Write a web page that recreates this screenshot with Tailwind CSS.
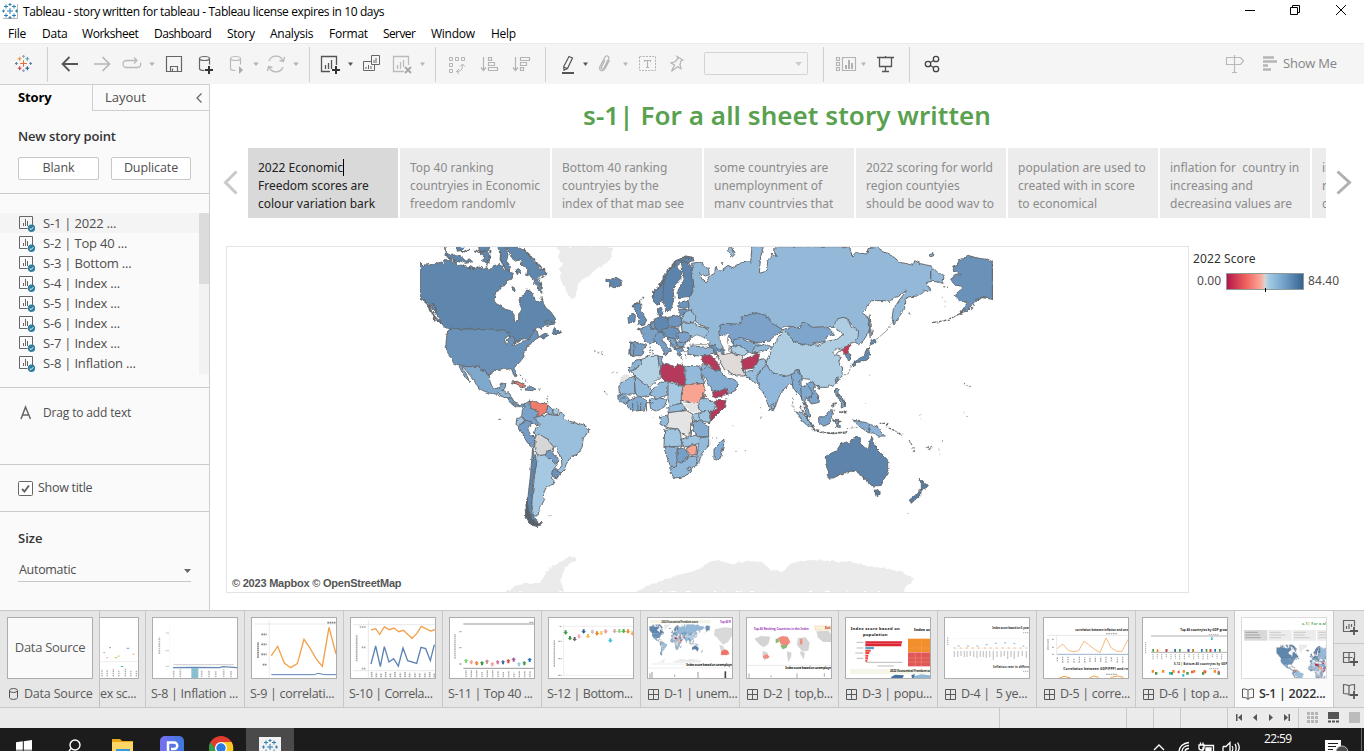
<!DOCTYPE html>
<html lang="en">
<head>
<meta charset="utf-8">
<title>Tableau - story written for tableau</title>
<script src="https://cdn.jsdelivr.net/npm/@tailwindcss/browser@4"></script>
</head>
<body class="w-[1364px] h-[751px] overflow-hidden bg-white flex flex-col font-['Open_Sans','Noto_Sans',sans-serif] text-[#4e4e4e] whitespace-nowrap">

<!-- Shared drawings -->
<svg class="absolute w-0 h-0" aria-hidden="true">
<defs>
<filter id="coast" x="0" y="0" width="1" height="1"><feTurbulence type="fractalNoise" baseFrequency=".22" numOctaves="2" seed="4"/><feDisplacementMap in="SourceGraphic" scale="3.500" xChannelSelector="R" yChannelSelector="G"/></filter>
<g id="tlogo"><path stroke="#eb6a2c" d="M0-3.5v7M-3.5 0h7"/><path stroke="#e8912f" d="M-4-7v4M-6-5h4"/><path stroke="#5b9aa8" d="M4-7v4M2-5h4"/><path stroke="#c03a3f" d="M-4 3v4M-6 5h4"/><path stroke="#2a4f88" d="M4 3v4M2 5h4"/><path stroke="#8ea0c4" d="M0-9v3M-1.5-7.5h3M0 6v3M-1.5 7.5h3"/><path stroke="#5f7d9e" d="M-9 0h3M-7.5-1.5v3M6 0h3M7.5-1.5v3"/></g>
<g id="blogo" stroke="#2f7fb2"><path d="M0-3v6M-3 0h6M-4-6.500v4M-6-4.500h4M4-6.500v4M2-4.500h4M-4 2.500v4M-6 4.500h4M4 2.500v4M2 4.500h4M0-8v3M-1.500-6.500h3M0 5v3M-1.500 6.500h3M-8 0h3M-6.500-1.500v3M5 0h3M6.500-1.500v3"/></g>
<g id="grid4" fill="none" stroke="#5a5a5a"><path d="M.5.500h10v10h-10zM5.500.500v10M.5 5.500h10"/></g>
<g id="sheeticon"><path d="M13.500 9V.500H.5v12h8" fill="none" stroke="#666"/><path d="M4.500 10V7M6.500 10V3M8.500 10V5" stroke="#666" fill="none"/><circle cx="12.500" cy="12.300" r="3.700" fill="#2f7d9f"/><path d="M10.700 12.400l1.300 1.300 2.300-2.500" stroke="#fff" fill="none"/></g>
<g id="up"><path d="M0-7l7 7H3v6h-6V0h-4z"/></g>

<g id="world" stroke-linejoin="round">
  <g transform="translate(410 240) scale(.33333)">
    <path fill="#ebebeb" d="M438 20H610L600 62 585 72 560 85 545 98 528 112 512 122 502 140 497 170 490 178 472 162 466 145 455 130 450 110 455 95 446 88 460 72 448 60 445 45 452 36z"/>
    <g stroke="#666a6e" stroke-width="3">
    <path fill="#5f87ae" d="M31 67L40 76 52 71 63 78 72 70 86 72 92 66 99 71 104 58 112 62 124 57 127 69 137 67 142 77 160 75 172 84 182 77 196 86 205 80 222 88 231 82 236 92 248 84 252 72 262 80 268 70 280 86 287 96 294 89 300 97 310 100 302 118 290 122 288 136 270 140 266 152 257 156 252 180 257 190 272 198 286 208 302 212 311 222 314 246 321 248 326 240 326 222 334 212 328 200 332 186 329 172 344 164 350 150 362 154 371 166 376 184 390 187 397 170 400 190 408 204 421 214 436 235 437 247 424 252 404 256 395 266 386 262 373 270 368 280 358 296 344 296 330 299 312 308 304 312 300 295 292 282 278 270 268 272 250 267H118L104 262 92 246 80 222 66 206 58 190 44 186 31 178z"/>
    <path fill="#5f87ae" d="M104 20L108 38 122 46 140 44 154 50 168 64 178 56 188 66 166 70 150 62 138 66 124 54 107 50zM140 20L142 34 158 30 160 20M205 20L210 40 222 46 218 62 236 72 242 50 232 38 240 20M262 20L272 40 270 58 284 84 296 96 302 82 290 62 294 44 284 20M286 20L304 46 312 64 330 60 336 74 354 90 350 106 366 112 372 132 384 136 382 148 396 160 394 136 382 118 392 106 410 102 400 88 388 90 384 72 372 66 362 46 348 38 336 28 318 20zM306 140l8 4 2 8-9-2zM402 244l14-4 18 12-22 4zM426 280l8-18 10 8 8 12-14 2zM388 290l12-8 16 4-14 8zM316 90l10-4 6 12-10 6z"/>
    <path fill="none" d="M38 178l14 14 10 24M56 194l8 20 10 16 20 20M66 188l12 14-4 18M72 228l3 16M150 30l16 8 10-8M196 30l12 8 20-6" stroke-width="5"/>
    <path fill="none" stroke-width="5" stroke-dasharray="10 4" d="M338 28l28 22 18 24 18 14 6 16-20 14 8 22-2 14M104 44l20 14 30 8M160 76l24 10 20-4M242 30l-6 30-8 22M270 30l6 40 18 24"/>
    <path fill="#6a92b8" d="M118 267H250L268 272 282 270 300 280 294 288 286 292 284 306 290 314 294 296 302 292 314 292 314 304 307 316 318 314 330 306 344 302 358 296 366 284 374 270 382 274 386 293 370 302 360 314 350 318 348 334 340 338 342 350 336 358 324 372 315 384 316 396 321 408 317 410 308 396 304 386 290 388 282 384 272 388 258 388 244 394 238 406 228 398 224 388 215 392 206 378 190 380 168 380 148 375 131 370 124 354 116 346 110 334 108 310 110 290 113 276z"/>
    <path fill="#7fa8cd" d="M148 375L168 380 190 380 206 378 215 392 224 388 228 398 238 406 240 424 246 440 258 446 270 440 274 432 288 432 284 446 270 456 264 462 250 462 232 458 208 446 200 434 196 424 178 404 168 390 156 380zM146 376l8 16 8 12 8 12 9 8-9-18-10-14-6-16z"/>
    <path fill="#8fb7d8" d="M264 462l10-10 8-2 2 12 12-4 10 14-4 12-12-10-14-6z"/><path fill="#7099c0" d="M290 474l16-4 6 20 18 4 12-2-4 8-18 0-12-8z"/>
    <path fill="#f07c6c" d="M302 426l20-2 26 14-14 2-14-8z"/><path fill="#7099c0" d="M350 442l14-2 14 8-14 4-16-2zM328 448l8 2"/>
    <path fill="none" stroke-width="3" stroke-dasharray="5 7" d="M330 404l8 12 16 14M410 462l2 24 4 10M386 446l8 4M265 538h12M552 332l14 6 18 8M582 454l8 4-2 6"/>
    <path fill="#7aa2cb" d="M343 492l18-10 4 20 28 8 4 22-10 4-2 18-30-6-20-18 2-16z"/>
    <path fill="#f07c6c" d="M360 486l12-4 10 7 20-2 12 10-2 16-8 6-10 16-10-4 0-18-22-8z"/>
    <path fill="#8ab2d6" d="M414 496l14 12-2 16-10-2-6-10z"/><path fill="#a8cae2" d="M428 508l18 0-2 16-14-2z"/><path fill="#d8d8d8" stroke="none" d="M446 508l12 8-8 8-5-2z"/>
    <path fill="#9cc2de" d="M320 536l14-6 10 12-16 14-10-2z"/>
    <path fill="#769dc6" d="M344 540l22 6-12 24 10 18 10 4-2 32-20-16-18-32-10-18 20-12z"/>
    <path fill="#9abfdc" d="M372 534l18-6 12 2 10-8 16 4 18 0 8-10 12 22 26 10 28 6 16 12 0 12-16 16-4 28-12 20-22 8-14 24-6 16-14 14-6-8 14-20-2-24-10-14-6-16-16-4-26-22-10 2-14-16 6-20 14-6z"/>
    <path fill="#d6d6d6" d="M376 590l12-8 24 16 18 22 0 12-18 0-4 14-26 0-8-22z"/>
    <path fill="#759cc5" d="M408 634l16-4 8 16 12 8-2 16-14 0-20-20z"/><path fill="#6b91bb" d="M430 688l10-2 10 14-8 14-14-4-4-12z"/>
    <path fill="#a5c9e2" d="M382 648l24-4 28 26 6 6-14 18-2 20 8 8-4 14-20 4-4 14-8 16 8 8-16 28-4 22-18 0 0-46 6-60z"/>
    <path fill="#6086ae" d="M368 624l8 22 4 26-10 42-6 80 8 38 20 24-16 0-18-24-6-42 10-90z"/>
    <path fill="#59626b" d="M345 794l8-22 8 56 14 18 22 2-16 12-20-8-14-22z"/>
    <path stroke="#c8c8c8" d="M414 827h12"/>
    </g>
  </g>

  <g transform="translate(600 240) scale(.33333)">
    <path fill="#ebebeb" d="M0 20h28l-6 34-12 24-10 6z"/>
    <g stroke="#666a6e" stroke-width="3">
    <!-- Russia -->
    <path fill="#94b8d8" d="M276 70L300 66 324 82 328 104 316 108 298 98 306 118 318 128 326 110 344 100 346 82 360 94 384 76 400 84 430 64 452 66 456 20 490 20 482 50 478 100 498 94 504 62 516 40 532 50 520 30 530 20 H748L756 48 768 38 800 42 804 26 832 22 850 34 880 50 898 66 940 76 944 62 960 70 996 80 1014 98 1032 112 1028 130 1014 126 996 124 976 128 990 144 992 152 972 152 952 168 930 170 914 178 914 206 896 232 882 252 876 238 880 208 898 180 920 152 904 160 896 170 882 172 870 184 850 182 814 182 786 218 804 232 810 262 804 280 790 302 776 314 762 304 776 280 760 260 740 234 714 236 700 262 672 264 640 270 616 248 590 264 560 256 540 270 510 250 496 230 466 220 424 232 420 254 360 256 356 278 370 300 366 332 340 324 320 310 300 290 326 264 290 250 280 224 266 210 264 180 280 154z"/>
    <path fill="#94b8d8" d="M388 20l-4 14 12 18 8-8-10-24zM810 224l4 38 4 20-8 8-2-30zM368 74l4-6-8 0zM988 44l14-4-2 8-10 2z"/>
    <!-- Nordic -->
    <path fill="#5f86af" d="M158 158l22-22 12-28 20-24 22-26 22-10 22 4 4 10-20 4-16-2-18 14-18 20-16 48-4 28-10 20-14-4-8-16z"/>
    <path fill="#5c83ab" d="M192 124l18-38 16-12 20 22-4 22-24 28 4 26-8 34-14 10-12-34z"/>
    <path fill="#5c83ab" d="M244 66l20 0 10 16 8 60-12 30-34 4-2-24 18-36z"/>
    <path fill="none" stroke-width="7" stroke-dasharray="7 3" d="M158 170l4-18 26-20 4-24 20-26 16-18 24-12 24 2"/>
    <path fill="#5f86af" d="M18 114l14 6 16-8 18 10-2 12-18 10-18-6 2-10-12-2zM172 206l12-4 6 16-10 14-6-10z"/>
    <path fill="#6c94bd" d="M240 186l24-4 4 16-14 8-18-6zM236 208l24 0 2 16-24 2z"/>
    <!-- British Isles -->
    <path fill="#658db6" d="M98 196l12-8 12 4 2 20 8 16 8 12-6 12-24 4 8-18-4-14zM84 232l12-12 10 8-2 18-18 4z"/><path fill="none" stroke-width="5" stroke-dasharray="5 3" d="M96 200l26-16 6-14"/>
    <!-- Western Europe -->
    <path fill="#7ba1c6" d="M114 268l24-8 18-16 20 18-4 22-4 18-20 10-16-8-4-26z"/><path fill="#769cc3" d="M92 306l24 2 24 8-10 12-6 22-20 0-14-4z"/><path fill="#7ba1c6" d="M92 308l10 2-2 36-10-2z"/>
    <path fill="#5f87b0" d="M162 238l18-8 22 2 4 26-8 18-26 0-6-20z"/><path fill="#6d95be" d="M204 232l36-6 6 18-6 18-34-4z"/>
    <path fill="#759dc5" d="M170 278l30-2 2 12-18 8 10 16 22 20-12 6-8 10-6-2 4-12-20-22-12-12zM148 254l14-10 4 24-12 0z"/>
    <path fill="#6b92bb" d="M186 268l32-6 18 6 6 18-14 12-18-2-20-10z"/><path fill="#7ca2ca" d="M228 282l22-6 18 4 6 16-14 10-22-2zM204 292l20 4 8 12-6 20-14-12zM232 306l24 0-2 16-20 2z"/>
    <path fill="#759cc5" d="M226 326l22-2 6 8-16 4 8 10-12 0z"/><path fill="none" stroke-width="4" stroke-dasharray="4 4" d="M238 346l10 14M252 328l8 28M208 300l20 26M150 320l4 22M158 330l2 14M190 340l16 2"/>
    <path fill="#9bc0dd" d="M258 214l16-4 14 24-8 14-36-2 0-12z"/><path fill="#9bc0dd" d="M244 250l38-2 8 10 30 6 6 14-16 18-16-6-12 10-18-22-18-4z"/>
    <path fill="#8fb5d8" d="M262 322l16-4 24 2 38 4 2 14-14 8-36 2-28-6z"/><path fill="#6d94bc" d="M322 312l24 6 14 10 10 2 0 12-28-2-2-14z"/>
    <!-- Central and South Asia -->
    <path fill="#7ba2c9" d="M360 256l20-6 42 4 2-22 42-14 32 8 18 24 34 20-20 12-24 22-40 2-40-12-24 18-14-18-30-4z"/>
    <path fill="#aecde3" d="M552 270l32 22 24 14 46 10 26-12 24-4 28-16-22-16 -10-6 10-26 22-4 14 10 8 20 22 10-2 22-12 14-14 2-16 22-16 2-12 8 20 8-8 16 12 18-2 24-20 24-24 10-20 0-18-8-14-16-20-2-22 8-38-6-34-6-18-42 14-40z"/>
    <path fill="#7ea5cb" d="M552 270l20-10 28 6 8-20 30 16 36-2 18 12 12 10-24 8-6 14-52 12-36-8-20-22z"/>
    <path fill="#84acd2" d="M400 300l24-6 20 12 28 2 12 14-14 18-16 0-30-18-24-4z"/><path fill="#accde2" d="M390 320l30-4 28 18-22 18-26-8z"/><path fill="#93badb" d="M462 322l34-10 18 10-26 12-30 6z"/>
    <path fill="#84abd0" d="M300 388l16-12 28 14 16 2 22 24 14 0 20 10-8 24-22 12-40 2-24-34z"/>
    <path fill="#98bedb" d="M430 398l28-8 18-30 16-4 6 12-14 30 18 6 22 22 24 4 4 14-24 0-34-12-10 6-24-12z"/>
    <path fill="#91b8da" d="M470 414l10-22 20-18 12 20 40 16 28-8 14 14-4 24-20-8-26 22-18 44-6 14-10-2-16-44-18-30z"/><path fill="#91b8da" d="M512 496l10-6 2 14-8 4z"/>
    <path fill="#82abd2" d="M580 400l16-10 10 18 0 28-14 28-14-34z"/>
    <path fill="#e0dad9" d="M348 332l20 12 24-6 32 8 6 40 4 22-24 0-36-18-18-32z"/>
    <path fill="#b6375a" d="M426 360l20-8 16-6 10-8 6 10-6 20-12 16-32 6z"/>
    <path fill="#b6375a" d="M306 350l24-4 16 10 16 32-16 2-20-14-18-8z"/>
    <path fill="#8cb3d7" d="M302 376l14-4 4 8-14 12z"/><path fill="#b6375a" d="M338 456l44-10 2 16-38 12-6-4z"/>
    <path stroke-width="2" fill="#fff" d="M268 302l12-12 10-6 20 8 20 14-4 8-32 0-24 2z"/><path stroke-width="2" fill="#fff" d="M360 292l14-10 12 2-4 16 4 18 6 22-18 2-4-18-8-16z"/>
    <!-- Africa -->
    <path fill="#8db4d7" d="M84 388l24-28 20-2-2 16-32 20z"/><path fill="#b6d3e6" d="M92 394l34-20 0-14 22-14 26 0 4 36 2 28-34 34-24-18z"/><path fill="#80a9d0" d="M174 348l10 2 4 28-10 2z"/>
    <path fill="#b6375a" d="M180 384l10-14 16 2 22 10 6-12 18 4 2 66-40-16-18 0-14-14z"/>
    <path fill="#93badb" d="M254 376l44 2 16 52-58 2zM56 432l46-24 4 54-48 0zM104 408l52 40-8 18-34 6-10-20zM148 464l32-38 26 2-2 36-28 12z"/>
    <path fill="#a6cae3" d="M204 426l46 14-4 50-34 12-8-24z"/>
    <path fill="#f9a493" d="M252 432h58l6 22-12 32-20 4-40-6 0-22zM308 458l14 8-14 6z"/><path fill="#e3e3e3" stroke="none" d="M56 430l14-26 18 0-4 12zM250 494l28-8 18 4 4 24-22 4z"/>
    <path fill="#82abd1" d="M54 464l22 0 12 14-10 14-24-14zM80 486l34-18 26 14-6 28-36 4-14-12z"/><path fill="#93badb" d="M148 478l30-4 22 4-6 22-24 14-18-8zM204 500l20-6 22-4 14 20-34 6-22 2z"/>
    <path fill="none" d="M98 488v24M114 484v28M122 486v24M138 480l2 34M60 474l14 0M140 488l20 0"/>
    <path fill="#9bc2df" d="M294 500l8-24 22 0 26 20-20 30-24 0z"/><path fill="#b6375a" d="M340 482l38 0-6 22-24 24-16 16 0-26 22-14-6-10z"/>
    <path fill="#e4e4e4" d="M206 518l30-4 24-2 18 10-6 38-2 34-26-12-8-14-36-6-10-10 12-14z"/><path fill="#93badb" d="M178 530l22-4 8 16-10 20-14-10z"/>
    <path fill="#9fc5e0" d="M300 516l28-2 2 34-32-6zM278 524l18-6 2 22-18 4zM194 568l40-2 8 18 4 34-54 4zM242 598l50-14 14 12-14 16-40 10z"/>
    <path fill="#84abd0" d="M276 546l22-4 28 16 0 32-34 0-14-22z"/><path fill="#94bbdb" d="M302 594l24-4 0 28-22 24-8 30-8-4 6-42 2-28z"/>
    <path fill="#f9a493" d="M258 628l18-14 14 4-2 26-16 2zM274 548l4 10-6-4z"/><path fill="#8bb2d5" d="M192 620l40 2 0 36-6 24-14-4-12-26z"/><path fill="#779fc7" d="M232 626l22 0 14 22-26 20-12-10z"/>
    <path fill="#93b9da" d="M212 678l14 2 8-18 10 8 26-20 20-2 0 24-20 28-26 12-22 2-8-14z"/><circle cx="267" cy="686" r="6" fill="#9abfdb"/><path fill="#84abd2" d="M342 628l22-24 8-6-2 22-12 42-16-4z"/>
    <path fill="none" stroke="#999" stroke-width="3" stroke-dasharray="4 9" d="M36 398l18 0M10 454l12 8M160 528v8M400 556l4 10M406 634h4M434 632h4M482 504l0 34M4 336l10 10M378 476l10 2M338 594h20"/>
    </g>
  </g>

  <g transform="translate(780 240) scale(.33333)" stroke="#666a6e" stroke-width="3">
    <path fill="#6a91b8" d="M638 66V178L600 172 590 184 572 194 562 212 540 220 554 200 562 188 540 184 522 166 542 150 544 140 520 130 512 118 526 106 544 104 522 94 518 82 532 76 538 58 552 56 566 46 584 52 604 56 624 58z"/>
    <path fill="none" d="M638 66V180" stroke-width="5"/><path fill="none" stroke-width="4" stroke-dasharray="12 3" d="M458 248l44-8 40-20 14-14"/><path fill="none" stroke-width="7" stroke-dasharray="6 3" d="M590 180l22-12M574 206l8-12"/><path stroke-width="4" d="M452 76v48"/>
    <path fill="none" stroke-width="2" d="M342 242l-22 30-28 24-14 8M262 230l8 20 4 36"/>
    <path fill="#608ab2" d="M270 296l14 4 4 8-16 6zM268 320l4 22-8 16-24 8-24 4 18-12 18-10 10-22zM216 368l12-4 2 12-10 2z"/>
    <path fill="#c33955" stroke-width="2" d="M190 326l26-16-2 8-10 10 2 12-10 4-6-4z"/><path fill="#6690b9" d="M196 342l12-2 4 18-10 4z"/><path fill="#fff" stroke="#777" d="M158 336l16-12 14 6-14 6-8 10z"/>
    <path fill="none" stroke-width="2" stroke-dasharray="7 4" d="M212 376l-4 20-22 12"/>
    <path fill="#82abd1" d="M34 406l16-16 16 18-10 18 12 18-4 18 6 20 12 20-6-2-16-36-20-18z"/>
    <path fill="#80a9cf" d="M62 444l18-10 10 8 12 24-8 8-16-2-6 24-6-16z"/><path fill="#7ba5ce" d="M80 432l18-8 6 12-4 12 16 20-2 20-20 4-14-18 18 0-2-20z"/>
    <path fill="#8db5d7" d="M50 512l14 6 26 24 10 20-12 0-22-20z"/><path fill="#7aa2c9" d="M72 500l12 6 6 26-10-6zM116 532l18-2 12-16 12 2-4 16-4 18-18 8-16-10z"/>
    <path fill="#7ba3c9" d="M164 540l10-2 10 6-12 4 10 14-8 0-6-10zM166 446l8 0 0 18 16 8 6 26-12 6 0-16-16-22z"/><path fill="#7099c1" d="M166 418l8-8 0 12-6 8zM112 436l10 2-4 10-6-4z"/>
    <path fill="none" stroke-width="5" stroke-dasharray="9 2" d="M98 570l34 8 30 2 40-4M170 466l18 14 8 16M150 510l14 2M156 498l14-10M180 516l22 2M60 500l20 30 20 34M160 536l16 10-6 16"/><path fill="none" stroke-width="2" stroke-dasharray="8 4" d="M38 472l0 26 22 38 44 34M200 566l30-4"/>
    <path fill="#84abcf" d="M218 540l18 4 24 4 8 6 0 26-24-16-16-14z"/><path fill="#8db4d6" d="M268 552l26 10 10 18 12 8-22 0-12-10-14 4z"/>
    <path fill="none" stroke-width="4" stroke-dasharray="8 3" d="M296 550l24 0 0 12M326 564l20 8 20 14"/>
    <path fill="#5e84ab" d="M136 650L148 642 172 632 182 612 196 606 206 612 216 596 230 590 242 596 240 610 256 624 266 624 272 590 282 606 288 624 304 640 316 652 326 664 326 686 318 706 310 722 304 736 282 738 268 734 260 716 252 720 248 706 236 700 222 692 200 696 180 704 160 714 144 714 146 696 138 676z"/>
    <path fill="#557aa1" d="M286 750l14 2 0 12-8 6z"/><path fill="none" stroke-width="4" d="M248 708l6 12"/>
    <path fill="#557ca3" d="M418 712l10 10 6 12 12 0-10 14-12 2 0-16zM424 750l-2 14-16 14-12 12-6-10 18-14 12-16z"/>
    <path fill="none" stroke="#777" stroke-width="4" stroke-dasharray="6 5" d="M548 430l10 2 14 12M388 600l8 16 8 20M440 622l14 2M446 630l10-10M486 602l8 2M490 140l14 2M386 218l8 6"/>
    <path fill="none" stroke="#aaa" stroke-width="3" stroke-dasharray="4 10" d="M418 524l8 14 14 12M476 626l4 16M548 516l16 14M254 490v6M270 404l2 14M384 818v6M340 512h8M486 170l16 36"/>
  </g>
  <path fill="#ebebeb" d="M505 592L514 586 524 584 540 583 543 576 549 568 560 562 569 556 577 559 565 568 561 580 564 592zM636 592L652 584 674 576 699 570 706 563 718 560 731 564 748 561 762 562 771 570 782 572 792 563 810 560 828 561 850 562 864 565 882 568 900 571 914 579 906 586 904 592z"/>
</g>
</defs>
</svg>

<!-- Title bar -->
<header class="h-[23px] flex items-center justify-between shrink-0 text-black">
  <div class="flex items-center">
    <svg class="w-[23px] h-[23px]" viewBox="0 0 23 23" fill="none"><path d="M3 18.500h14.500V4" stroke="#b5b5b5"/><use href="#blogo" x="10" y="11"/></svg>
    <span class="text-[12px] tracking-[-0.39px]">Tableau - story written for tableau - Tableau license expires in 10 days</span>
  </div>
  <svg class="w-[130px] h-[23px]" viewBox="1234 0 130 23" fill="none" stroke="#000"><path d="M1245 10.500h10M1290.500 7.500h7v7h-7zM1292.500 7.500v-2h7v7h-2M1336 5l10 10M1346 5l-10 10"/></svg>
</header>
<!-- Menu -->
<nav class="h-5 pt-[2px] flex items-center shrink-0 text-black text-[12px] tracking-[-0.25px] pl-2">
  <span class="w-[34px]">File</span><span class="w-10">Data</span><span class="w-[72px] tracking-[-0.45px]">Worksheet</span><span class="w-[73px] tracking-[-0.5px]">Dashboard</span><span class="w-[43px]">Story</span><span class="w-[59px]">Analysis</span><span class="w-[54px]">Format</span><span class="w-12 tracking-[-0.6px]">Server</span><span class="w-[60px]">Window</span><span>Help</span>
</nav>

<!-- Toolbar: each cell's viewBox continues where the one before it ends -->
<div class="h-[41px] bg-[#f5f5f5] border-t border-[#ebebeb] flex items-center shrink-0">
  <svg class="w-12 h-10" viewBox="0 44 48 40" fill="none" stroke-width="1.100"><use href="#tlogo" transform="translate(23.500 63.500) scale(.95)"/><path d="M47.500 47v35" stroke="#d0d0d0"/></svg>
  <svg class="w-[262px] h-10" viewBox="48 44 262 40" fill="none">
    <path d="M78 64H63M69.500 57l-7 7 7 7" stroke="#555" stroke-width="1.800"/>
    <path d="M94 64h15M102.500 57l7 7-7 7" stroke="#b5b5b5" stroke-width="1.600"/>
    <path d="M132 67.500h-5.500a3.500 3.500 0 0 1 0-7H137M134 57.500l3 3-3 3M134 67.500h3.500a3.500 3.500 0 0 0 3-5" stroke="#b9b9b9" stroke-width="1.300"/><path d="M131 67.500h4" stroke="#b9b9b9" stroke-width="1.300"/>
    <path d="M149 62.500h6l-3 3.500z M253 62.500h6l-3 3.500z M293 62.500h6l-3 3.500z" fill="#b5b5b5"/>
    <path d="M166.500 56.500h15v15h-15zM170.500 71v-4.500h7V71M172.500 68.500v3" stroke="#666" stroke-width="1.200"/>
    <g stroke="#666" stroke-width="1.200"><ellipse cx="204.500" cy="58.500" rx="5" ry="2"/><path d="M199.500 58.500v10c0 1.500 2 2 5 2M209.500 58.500v6"/></g><path d="M209 66v8M205 70h8" stroke="#333" stroke-width="2"/>
    <g stroke="#bbb" stroke-width="1.200"><ellipse cx="235.500" cy="58.500" rx="5" ry="2"/><path d="M230.500 58.500v10c0 1.500 2 2 5 2M240.500 58.500v6"/></g><path d="M239 66l4 4-4 4z" fill="#aaa"/>
    <path d="M269 61a7.500 7.500 0 0 1 14 0M283 67a7.500 7.500 0 0 1-14 0M284.500 57l-1 4.500-4-1M267.500 71l1-4.500 4 1" stroke="#b9b9b9" stroke-width="1.300"/>
    <path d="M309.500 47v35" stroke="#d0d0d0"/>
  </svg>
  <svg class="w-[126px] h-10" viewBox="310 44 126 40" fill="none">
    <path d="M330 71.500h-8.500v-15h15V65M325.500 69v-4M328.500 69v-6M331.500 69v-9" stroke="#555" stroke-width="1.300"/><path d="M336 66v8M332 70h8" stroke="#333" stroke-width="2"/>
    <path d="M348 62.500h5l-2.500 3.500z" fill="#555"/>
    <path d="M371.500 55.500h8v9h-8zM371.500 61.500h-8v9h11v-6M366 69v-2M368.500 69v-4M371 69v-3M374 63v-3M376 63v-5" stroke="#666"/>
    <path d="M404 71.500h-10.500v-15h15V65M397.500 69v-4M400.500 69v-7M403.500 67v-7" stroke="#bbb" stroke-width="1.300"/><path d="M405 67l6 6M411 67l-6 6" stroke="#a8a8a8" stroke-width="2"/>
    <path d="M420 62.500h5l-2.500 3.500z" fill="#b5b5b5"/><path d="M435.500 47v35" stroke="#d0d0d0"/>
  </svg>
  <svg class="w-[110px] h-10" viewBox="436 44 110 40" fill="none" stroke="#b3b3b3">
    <path d="M449.500 57.500h3v3h-3zM455.500 57.500h3v3h-3zM461.500 57.500h3v3h-3zM449.500 63.500h3v3h-3zM449.500 69.500h3v3h-3zM456.500 71.500c4 0 6-2 6-6.500M460 66.500l2.500-2.500 2.500 2.500M459 69l-2.500 2.500 2.500 2.500"/>
    <path d="M483.500 57v13M481 67.500l2.500 3 2.500-3M488.500 57.500h3v3h-3zM488.500 62.500h6v3h-6zM488.500 67.500h9v3h-9z" stroke-width="1.200"/>
    <path d="M515.500 57v13M513 67.500l2.500 3 2.500-3M520.500 57.500h9v3h-9zM520.500 62.500h6v3h-6zM520.500 67.500h3v3h-3z" stroke-width="1.200"/>
    <path d="M545.500 47v35" stroke="#d0d0d0"/>
  </svg>
  <svg class="w-[278px] h-10" viewBox="546 44 278 40" fill="none" stroke="#b3b3b3">
    <path d="M569 56.500l3.500 1.500-5 10.500-3.500 1.500-.3-3.500zM563.500 67l4 1.500" stroke="#555" stroke-width="1.200"/><path d="M562 73h12" stroke="#555" stroke-width="2"/>
    <path d="M583 62.500h5l-2.500 3.500z" fill="#555" stroke="none"/><path d="M623 62.500h5l-2.500 3.500z" fill="#b5b5b5" stroke="none"/>
    <path d="M605 60l-3.500 7c-.8 2 1.500 3 2.500 1l4.500-9c1.300-3-2.300-4.500-3.800-1.500l-4.700 9c-1.500 4 2.500 6 4.800 2.500l4.700-9" stroke-width="1.200"/>
    <rect x="639.500" y="56.500" width="16" height="14" stroke-dasharray="2 1.200"/><path d="M644 60.500h7M644.500 60v2M650.500 60v2M647.500 60.500v7M646 67.500h3" stroke-width="1.100"/>
    <path d="M677 56.500l6 3.500-2 .7-1 4 1 4-3.500-2-6 4.500 3-6.300-3.500-2 4-1.200 3-3z" stroke-width="1.200"/>
    <rect x="704.500" y="52.500" width="103" height="22" rx="1" stroke="#d3d3d3"/><path d="M795 62h7l-3.500 4z" fill="#ccc" stroke="none"/><path d="M823.500 47v35" stroke="#d0d0d0"/>
  </svg>
  <svg class="w-[120px] h-10" viewBox="824 44 120 40" fill="none">
    <path d="M836.500 57.500h3v3h-3zM836.500 62.500h3v3h-3zM836.500 67.500h3v3h-3zM842.500 57.500h13v13h-13z" stroke="#b3b3b3" stroke-width="1.200"/><path d="M846 69v-4M849 69v-9M852 69v-6" stroke="#aaa" stroke-width="1.800"/><path d="M861 62.500h5l-2.500 3.500z" fill="#b5b5b5"/>
    <path d="M877 57.500h17M879.500 58v8.500h12V58M885.500 66.500v5M882 71.500h7M885.500 56v2" stroke="#555" stroke-width="1.300"/>
    <path d="M909.500 47v35" stroke="#d0d0d0"/>
    <g stroke="#444" stroke-width="1.300"><circle cx="928" cy="64" r="2.700"/><circle cx="936" cy="59" r="2.700"/><circle cx="936" cy="69" r="2.700"/><path d="M930.300 62.500l3.400-2M930.300 65.500l3.400 2"/></g>
  </svg>
  <svg class="w-14 h-10 ml-auto" viewBox="1222 44 56 40" fill="none"><path d="M1234.500 55v17M1232 72.500h5M1226.500 57.500h14l3 3.500-3 3.500h-14z" stroke="#b9b9b9" stroke-width="1.200"/><path d="M1263 57.500h11M1263 61.500h14M1263 65.500h5M1263 69.500h8" stroke="#b5b5b5" stroke-width="2.600"/></svg>
  <span class="w-[86px] pl-[5px] text-[13px] tracking-[-0.2px] text-[#858585]">Show Me</span>
</div>

<main class="h-[526px] flex shrink-0">
  <!-- Side pane -->
  <aside class="w-[210px] bg-[#fafafa] border-r border-t border-[#cfcfcf] flex flex-col text-[13px]">
    <div class="flex h-[26px] shrink-0">
      <div class="w-[92px] pl-[18px] leading-[25px] font-bold text-black tracking-[-0.15px]">Story</div>
      <div class="flex-1 border-l border-b border-[#cfcfcf] pl-3 pr-[6px] flex items-center justify-between"><span>Layout</span>
        <svg class="w-2 h-3" viewBox="0 0 8 12" fill="none" stroke="#666" stroke-width="1.300"><path d="M6.500 1.500L2 6l4.500 4.500"/></svg></div>
    </div>
    <div class="h-[83px] shrink-0 border-b border-[#cacaca] pl-[18px] pt-[15px]">
      <div class="font-semibold text-[#333] leading-5 tracking-[-0.15px]">New story point</div>
      <div class="flex gap-3 mt-[11px] text-[12.500px] tracking-[-0.1px]">
        <div class="w-[81px] h-[23px] border border-[#c8c8c8] bg-white rounded-[2px] text-center leading-5">Blank</div>
        <div class="w-20 h-[23px] border border-[#c8c8c8] bg-white rounded-[2px] text-center leading-5">Duplicate</div>
      </div>
    </div>
    <div class="h-[194px] shrink-0 border-b border-[#cacaca] pt-[19px]">
      <div class="flex h-[161px]">
        <div class="flex-1 flex flex-col leading-5 tracking-[-0.2px]">
          <div class="h-5 flex items-center pl-[19px] gap-2 bg-[#f4f4f4]"><svg class="w-4 h-4 mt-px"><use href="#sheeticon"/></svg>S-1 | 2022 ...</div>
          <div class="h-5 flex items-center pl-[19px] gap-2"><svg class="w-4 h-4 mt-px"><use href="#sheeticon"/></svg>S-2 | Top 40 ...</div>
          <div class="h-5 flex items-center pl-[19px] gap-2"><svg class="w-4 h-4 mt-px"><use href="#sheeticon"/></svg>S-3 | Bottom ...</div>
          <div class="h-5 flex items-center pl-[19px] gap-2"><svg class="w-4 h-4 mt-px"><use href="#sheeticon"/></svg>S-4 | Index ...</div>
          <div class="h-5 flex items-center pl-[19px] gap-2"><svg class="w-4 h-4 mt-px"><use href="#sheeticon"/></svg>S-5 | Index ...</div>
          <div class="h-5 flex items-center pl-[19px] gap-2"><svg class="w-4 h-4 mt-px"><use href="#sheeticon"/></svg>S-6 | Index ...</div>
          <div class="h-5 flex items-center pl-[19px] gap-2"><svg class="w-4 h-4 mt-px"><use href="#sheeticon"/></svg>S-7 | Index ...</div>
          <div class="h-5 flex items-center pl-[19px] gap-2"><svg class="w-4 h-4 mt-px"><use href="#sheeticon"/></svg>S-8 | Inflation ...</div>
        </div>
        <div class="w-[10px] bg-[#f2f2f2]"><div class="h-[71px] bg-[#dcdcdc]"></div></div>
      </div>
    </div>
    <div class="h-[77px] shrink-0 border-b border-[#cacaca] pt-[15px] pl-[19px] flex gap-[10px] leading-5">
      <svg class="w-[14px] h-5" viewBox="0 0 14 20" fill="none" stroke="#666" stroke-width="1.500"><path d="M2 16L6.500 4 11.500 16M3.500 12h6.500"/></svg>
      <span class="text-[12px] tracking-[-0.15px]">Drag to add text</span>
    </div>
    <div class="h-[47px] shrink-0 border-b border-[#cacaca] pl-[18px] flex items-center gap-[5px] text-[12.500px] tracking-[-0.3px]">
      <svg class="w-[15px] h-[15px]" viewBox="0 0 15 15" fill="none" stroke="#666"><rect x=".5" y=".5" width="14" height="14" rx="1" fill="#fff"/><path d="M4 8l2.500 2.500L11 4.500" stroke-width="2"/></svg>
      <span>Show title</span>
    </div>
    <div class="pl-[18px] pr-[18px] pt-4">
      <div class="font-semibold text-[#333] leading-5">Size</div>
      <div class="mt-3 h-[22px] pl-px border-b border-[#c8c8c8] flex items-center justify-between text-[12.500px] tracking-[-0.3px]"><span>Automatic</span>
        <svg class="w-[7px] h-1" viewBox="0 0 7 4"><path d="M0 0h7L3.500 4z" fill="#666"/></svg></div>
    </div>
  </aside>

  <!-- Story canvas -->
  <section class="flex-1 min-w-0 flex flex-col">
    <h1 class="mt-[11px] h-10 leading-10 text-center font-['Noto_Sans'] font-semibold text-[26px] tracking-[0.06px] text-[#59a14f]">s-1| For a all sheet story written</h1>
    <div class="mt-[13px] h-[70px] flex items-center shrink-0">
      <svg class="w-[38px] h-[70px]" viewBox="210 148 38 70" fill="none" stroke="#c9c9c9" stroke-width="3"><path d="M236.500 171.500l-11 11 11 11"/></svg>
      <div class="w-[1078px] flex gap-[2px] overflow-hidden font-['Noto_Sans'] text-[12px] leading-[18px] text-[#8b8b8b]">
        <div class="w-[150px] h-[70px] shrink-0 bg-[#d9d9d9] px-[10px] pt-[11px] text-[#222]"><div class="h-[49px] overflow-hidden"><span class="border-r border-black">2022 Economic</span><br>Freedom scores are<br>colour variation bark</div></div>
        <div class="w-[150px] h-[70px] shrink-0 bg-[#ececec] px-[10px] pt-[11px]"><div class="h-[49px] overflow-hidden">Top 40 ranking<br>countryies in Economic<br>freedom randomly</div></div>
        <div class="w-[150px] h-[70px] shrink-0 bg-[#ececec] px-[10px] pt-[11px]"><div class="h-[49px] overflow-hidden">Bottom 40 ranking<br>countryies by the<br>index of that map see</div></div>
        <div class="w-[150px] h-[70px] shrink-0 bg-[#ececec] px-[10px] pt-[11px]"><div class="h-[49px] overflow-hidden">some countryies are<br>unemploynment of<br>many countryies that</div></div>
        <div class="w-[150px] h-[70px] shrink-0 bg-[#ececec] px-[10px] pt-[11px]"><div class="h-[49px] overflow-hidden">2022 scoring for world<br>region countyies<br>should be good way to</div></div>
        <div class="w-[150px] h-[70px] shrink-0 bg-[#ececec] px-[10px] pt-[11px]"><div class="h-[49px] overflow-hidden">population are used to<br>created with in score<br>to economical</div></div>
        <div class="w-[150px] h-[70px] shrink-0 bg-[#ececec] px-[10px] pt-[11px]"><div class="h-[49px] overflow-hidden">inflation for&nbsp; country in<br>increasing and<br>decreasing values are</div></div>
        <div class="w-[150px] h-[70px] shrink-0 bg-[#ececec] px-[10px] pt-[11px]"><div class="h-[49px] overflow-hidden">index<br>related<br>country</div></div>
      </div>
      <svg class="w-[38px] h-[70px]" viewBox="1326 148 38 70" fill="none" stroke="#b0b0b0" stroke-width="3"><path d="M1337.500 171.500l12 11-12 11"/></svg>
    </div>
    <div class="flex mt-7 pl-4">
      <div class="relative w-[963px] h-[347px] border border-[#e4e4e4] shrink-0">
        <svg class="w-[961px] h-[345px] block" viewBox="227 247 961 345"><use href="#world" filter="url(#coast)"/></svg>
        <div class="absolute left-[5px] bottom-px font-['Liberation_Sans'] font-bold text-[11px] leading-4 text-[#555] tracking-[-0.22px]">© 2023 Mapbox © OpenStreetMap</div>
      </div>
      <div class="pl-1 pt-1 font-['Noto_Sans'] text-[12px] tracking-[0.1px]">
        <div class="leading-[18px] text-[#333]">2022 Score</div>
        <div class="flex items-center leading-[18px] mt-1 gap-1 pl-1">
          <span class="w-[25px]">0.00</span>
          <div class="w-[78px] h-[17px] border border-[#8f9a9a] relative bg-[linear-gradient(90deg,#b5174b,#f0625d_25%,#fbab9b_45%,#d6d6d6_50%,#a3cbe5_55%,#6b9ac4_78%,#38638f)]"><div class="absolute left-[38px] bottom-[-3px] w-px h-1 bg-black"></div></div>
          <span>84.40</span>
        </div>
      </div>
    </div>
  </section>
</main>

<!-- Sheet tabs -->
<div class="h-[98px] shrink-0 flex bg-[#e6e6e6] border-y border-[#c8c8c8] text-[12.500px] text-[#5a5a5a] tracking-[-0.3px]">
  <div class="w-[100px] border-r border-[#c0c0c0] pl-[7px] pt-[6px]">
    <div class="w-[86px] h-[62px] border border-[#adadad] bg-[#fafafa] flex items-center justify-center text-[13px]">Data Source</div>
    <div class="flex items-center gap-[6px] pl-[2px] leading-5 mt-[5px] tracking-[-0.2px]"><svg class="w-[9px] h-3 shrink-0" viewBox="0 0 9 12" fill="none" stroke="#555"><ellipse cx="4.500" cy="2.500" rx="4" ry="2"/><path d="M.5 2.500v7c0 2.500 8 2.500 8 0v-7"/></svg>Data Source</div>
  </div>
  <div class="w-[46px] border-r border-[#c8c8c8] pt-[6px] overflow-hidden">
    <svg class="w-[39px] h-[62px] border-y border-r border-[#adadad] bg-white" viewBox="0 0 117 180"><path stroke="#ccc" stroke-width="1" d="M0 132h117"/><path stroke-width="3" d="M10 104h6" stroke="#e29ad5"/><path stroke-width="3" d="M19 120h6" stroke="#f3a1a0"/><path stroke-width="3" d="M28 89h6" stroke="#999"/><path stroke-width="3" d="M45 120h8M54 115h6" stroke="#c2c14e"/><path stroke-width="3" d="M82 91h8" stroke="#6ca0d8"/><path stroke-width="3" d="M100 109h6" stroke="#f0a050"/><path stroke-width="3" d="M64 147h8" stroke="#46bcc8"/><path stroke="#aaa" stroke-width="4" stroke-dasharray="5 2" d="M6 178v-22M22 178v-22M41 178v-24M58 178v-18M78 178v-24M95 178v-18M112 178v-18"/></svg>
    <div class="leading-5 mt-[5px]">ex sc...</div>
  </div>
  <div class="w-[99px] border-r border-[#c8c8c8] pl-[6px] pt-[6px]">
    <svg class="w-[86px] h-[62px] border border-[#adadad] bg-white" viewBox="0 0 252 180"><path d="M50 16v160" stroke="#eee"/><path d="M60 149l60-1 80 1 10-3 45 3" stroke="#6688b4" stroke-width="4" fill="none"/><rect x="115" y="150" width="21" height="30" fill="#85bfd0"/><path stroke="#bbb" stroke-width="5" stroke-dasharray="5 2" d="M62 178v-22M82 178v-24M146 178v-22M168 178v-22M188 178v-18M212 178v-24M234 178v-20M19 108v-50"/><path stroke="#ccc" stroke-width="3" d="M38 45h10M38 98h10M38 145h10M62 140h180"/></svg>
    <div class="leading-5 mt-[5px] -ml-px">S-8 | Inflation ...</div>
  </div>
  <div class="w-[99px] border-r border-[#c8c8c8] pl-[6px] pt-[6px]">
    <svg class="w-[86px] h-[62px] border border-[#adadad] bg-white" viewBox="0 0 252 180"><path d="M52 6v170M6 18h246" stroke="#e2e2e2" stroke-width="2"/><path d="M58 113l19-28 20 50 19 14 20-12 20-73 18 26 18 32 19 23 20-117 21 80" stroke="#f3a04b" stroke-width="4" fill="none"/><path d="M58 170h130l10-4 20 4h34" stroke="#5d82b5" stroke-width="3" fill="none"/><path stroke="#888" stroke-width="5" stroke-dasharray="5 1.500" d="M18 120V72M28 49h16M28 79h16M28 109h16M32 140h12M226 14h26"/></svg>
    <div class="leading-5 mt-[5px] -ml-px">S-9 | correlati...</div>
  </div>
  <div class="w-[99px] border-r border-[#c8c8c8] pl-[6px] pt-[6px]">
    <svg class="w-[86px] h-[62px] border border-[#adadad] bg-white" viewBox="0 0 252 180"><path d="M52 6v174M6 20h246M6 158h246" stroke="#ddd" stroke-width="2"/><path d="M60 36l14-4 12 17 14-22 15 8 14-5 14 11 14-4 26 24 14-14 14-22 28 14 14-4" stroke="#f3a04b" stroke-width="4" fill="none"/><path d="M60 138l14-54 14 62 12-60 14 46 14-10 14 22 14-54 14 38 27 8 13-48 14 4 14 36 12-48" stroke="#5d82b5" stroke-width="4" fill="none"/><path stroke="#aaa" stroke-width="5" stroke-dasharray="5 1.500" d="M17 130V50M26 27h18M32 88h12M32 152h12M62 178v-16M76 178v-14M90 178v-12M104 178v-16M118 178v-12M132 178v-16M148 178v-14M162 178v-16M176 178v-14M192 178v-14M206 178v-12M222 178v-14M236 178v-16M250 178v-12"/></svg>
    <div class="leading-5 mt-[5px] -ml-px tracking-[-0.45px]">S-10 | Correla...</div>
  </div>
  <div class="w-[99px] border-r border-[#c8c8c8] pl-[6px] pt-[6px]">
    <svg class="w-[86px] h-[62px] border border-[#adadad] bg-white" viewBox="0 0 252 180"><path d="M40 18h212M40 151h212" stroke="#999" stroke-width="3"/><path stroke="#aaa" stroke-width="4" stroke-dasharray="5 1.500" d="M15 122V48M28 41h8M28 89h8M28 138h8M238 13h14M48 178v-22M64 178v-22M80 178v-22M96 178v-16M112 178v-22M128 178v-22M144 178v-18M160 178v-16M176 178v-20M192 178v-14M208 178v-20M224 178v-18M240 178v-20"/>
      <use href="#up" x="48" y="129" fill="#7bd66f"/><use href="#up" x="64" y="133" fill="#f79a9a"/><use href="#up" x="80" y="136" fill="#f07f2b"/><use href="#up" x="96" y="136" fill="#3e9a44"/><use href="#up" x="111" y="131" fill="#c49492"/><use href="#up" x="127" y="139" fill="#f79a9a"/><use href="#up" x="143" y="133" fill="#d36f9e"/><use href="#up" x="159" y="133" fill="#3e6fa5"/><use href="#up" x="175" y="130" fill="#e04548"/><use href="#up" x="191" y="125" fill="#9a6299"/><use href="#up" x="207" y="139" fill="#a0cbe8"/><use href="#up" x="223" y="136" fill="#3e9a44"/><use href="#up" x="239" y="126" fill="#2470b0"/></svg>
    <div class="leading-5 mt-[5px] -ml-px tracking-[-0.4px]">S-11 | Top 40 ...</div>
  </div>
  <div class="w-[99px] border-r border-[#c8c8c8] pl-[6px] pt-[6px]">
    <svg class="w-[86px] h-[62px] border border-[#adadad] bg-white" viewBox="0 0 252 180"><path d="M44 25h208M44 172h208M44 20v156" stroke="#ddd" stroke-width="1.500"/><path stroke="#aaa" stroke-width="4" stroke-dasharray="5 1.500" d="M16 146V66M32 25h6M28 70h10M28 122h10M28 172h10"/>
      <g transform="scale(1 -1)"><use href="#up" x="50" y="-43" fill="#3e9a44"/><use href="#up" x="63" y="-60" fill="#3e9a44"/><use href="#up" x="77" y="-63" fill="#666"/><use href="#up" x="90" y="-55" fill="#f8a9c0"/><use href="#up" x="104" y="-40" fill="#2d5f9c"/><use href="#up" x="117" y="-54" fill="#f2bd4b"/><use href="#up" x="130" y="-41" fill="#c4c4c4"/><use href="#up" x="144" y="-46" fill="#f58220"/><use href="#up" x="157" y="-45" fill="#f2cd5b"/><use href="#up" x="170" y="-40" fill="#f49a9a"/><use href="#up" x="184" y="-67" fill="#2fc1d3"/><use href="#up" x="197" y="-39" fill="#d8a9a3"/><use href="#up" x="211" y="-39" fill="#82d67b"/><use href="#up" x="224" y="-39" fill="#4eae4a"/><use href="#up" x="237" y="-40" fill="#f28e2b"/><use href="#up" x="250" y="-46" fill="#f3b26b"/></g></svg>
    <div class="leading-5 mt-[5px] -ml-px tracking-[-0.4px]">S-12 | Bottom...</div>
  </div>
  <div class="w-[99px] border-r border-[#c8c8c8] pl-[6px] pt-[6px]">
    <svg class="w-[86px] h-[62px] border border-[#adadad] bg-white" viewBox="0 0 252 180" font-family="Noto Sans" font-weight="700"><rect x="6" y="6" width="182" height="10" fill="#f5f2e6"/><text x="40" y="14" font-size="8" textLength="110" fill="#444">2022 Economical Freedom score</text><text x="216" y="14" font-size="8.500" fill="#a03cc0">Top 40 R</text><use href="#world" transform="translate(-128 -62) scale(.315 .330)"/><path fill="#d9d9d9" d="M200 34l30-6 22 2v24l-12 18-14 8-10-10-10-12-8-6zM214 80l12 4 4 14-8 18-4-18z"/><path fill="#f07366" d="M220 100l10-6 10 4 4 10-10 4-16-2z"/><path d="M10 138h240M0 150h252" stroke="#ccc"/><text x="115" y="145" font-size="9.500" textLength="137" fill="#111">Index score based on unemployn</text><path d="M6 166v14M12 162v18M80 170v6M150 162v18" stroke="#999" stroke-width="3"/><path d="M232 160v20" stroke="#444" stroke-width="5"/></svg>
    <div class="flex items-center gap-[5px] leading-5 mt-[5px] pl-px"><svg class="w-[11px] h-[11px]"><use href="#grid4"/></svg>D-1 | unem...</div>
  </div>
  <div class="w-[99px] border-r border-[#c8c8c8] pl-[6px] pt-[6px]">
    <svg class="w-[86px] h-[62px] border border-[#adadad] bg-white" viewBox="0 0 252 180" font-family="Noto Sans" font-weight="700"><text x="20" y="36" font-size="9" textLength="165" fill="#a03cc0">Top 40 Ranking Countries in the Index</text><g fill="#d4d4d4"><path d="M22 62l20-8 28 2-6 22-14 10-12-8zM48 98l14 6-2 16-8 8-6-18zM120 100l14 4-2 14-8 14-4-20zM152 60l24-2 12 16-4 24-18 2-16-18zM160 98l14 6-4 20-10-16zM208 40l36-2 8 10v24l-24 0-16-14z"/></g><path fill="#f28b7c" d="M92 60l14-6 16 2 8 16-8 10-20-2zM160 62l6 0 0 16-8 2zM48 114l12-6 8 8-6 6-14-2z"/><path fill="#83bd75" d="M86 62l8 0 2 10-10 4zM100 82l22-2-4 10-12 4z"/><rect x="204" y="24" width="48" height="12" fill="#faf3dc" stroke="#e8b068"/><text x="234" y="34" font-size="8" fill="#c03030">Bott</text><path d="M0 142h252" stroke="#bbb"/><text x="115" y="152" font-size="9.500" textLength="137" fill="#111">Index score based on unemployn</text><path d="M6 166v14M72 172v6M150 166v14M232 166v10" stroke="#aaa" stroke-width="3"/></svg>
    <div class="flex items-center gap-[5px] leading-5 mt-[5px] pl-px"><svg class="w-[11px] h-[11px]"><use href="#grid4"/></svg>D-2 | top,b...</div>
  </div>
  <div class="w-[99px] border-r border-[#c8c8c8] pl-[6px] pt-[6px]">
    <svg class="w-[86px] h-[62px] border border-[#adadad] bg-white" viewBox="0 0 252 180" font-family="Noto Sans" font-weight="700"><g fill="#111" font-size="12.500"><text x="14" y="36" textLength="147">Index score based on</text><text x="51" y="53" textLength="73">population</text><text x="204" y="38" textLength="48">Index sc</text></g><path d="M58 73h110M58 81h108" stroke="#dd2633" stroke-width="7"/><path d="M58 90h26" stroke="#5a9dc9" stroke-width="7"/><path d="M58 98h16M58 105h12M58 113h9M58 121h8M58 128h6" stroke="#f0463e" stroke-width="6"/><path fill="#f28e2b" d="M186 62h66v40h-66z"/><path fill="#e15759" d="M186 103h66v42h-66z"/><path d="M186 90h66M226 62v84M208 103v42M186 120h66M186 132h66" stroke="#f5b47a" fill="none"/><path stroke="#bbb" stroke-width="3" d="M32 73h20M32 90h20M28 105h24M32 121h20M60 133h110M94 144h50"/><rect x="12" y="153" width="240" height="15" fill="#f6f5e9"/><text x="132" y="163" font-size="9" textLength="120" fill="#222">2022 Economical Freedom sc</text><path fill="#46729f" d="M136 176l12-6 26 2-4 8h-34zM196 172l10-4v12h-8z"/><path fill="#8fb7d8" d="M206 174l20-5 26 3v8h-50z"/></svg>
    <div class="flex items-center gap-[5px] leading-5 mt-[5px] pl-px"><svg class="w-[11px] h-[11px]"><use href="#grid4"/></svg>D-3 | popu...</div>
  </div>
  <div class="w-[99px] border-r border-[#c8c8c8] pl-[6px] pt-[6px]">
    <svg class="w-[86px] h-[62px] border border-[#adadad] bg-white" viewBox="0 0 252 180" font-family="Noto Sans" font-weight="700"><g fill="#333" font-size="9"><text x="142" y="33" textLength="110">Index score based on 5 year</text><text x="144" y="151" textLength="108">Inflation rate in differe</text></g><path d="M24 62h228M24 92h228" stroke="#e6e6e6"/><g fill="none"><path stroke-width="3" stroke-dasharray="6 12" stroke="#f5b06a" d="M26 90h220"/><path stroke-width="3" stroke-dasharray="6 22" stroke="#83b8dc" d="M38 84h60l50-8 50-2 50 14"/><path stroke="#bbb" stroke-width="4" stroke-dasharray="4 2" d="M28 100v18M38 100v16M48 100v14M58 100v16M66 100v18M76 100v14M86 100v16M96 100v20M106 100v16M115 100v16M124 100v20M134 100v16M145 100v26M156 100v16M168 100v16M178 100v14M188 100v24M198 100v16M208 100v22M220 100v16M232 100v14M244 100v20M8 82V56M234 44h18M234 160h18"/></g></svg>
    <div class="flex items-center gap-[5px] leading-5 mt-[5px] pl-px"><svg class="w-[11px] h-[11px]"><use href="#grid4"/></svg>D-4 |&nbsp; 5 ye...</div>
  </div>
  <div class="w-[99px] border-r border-[#c8c8c8] pl-[6px] pt-[6px]">
    <svg class="w-[86px] h-[62px] border border-[#adadad] bg-white" viewBox="0 0 252 180" font-family="Noto Sans" font-weight="700"><g fill="#222"><text x="94" y="38" font-size="8.500" textLength="158">correlation between inflation and une</text><text x="58" y="157" font-size="10" textLength="194">Correlation between GDP(PPP) and rn</text></g><path d="M38 52v60M10 52h242" stroke="#ddd" stroke-width="2"/><path d="M40 92l16-14 18 20 16 3 14-3 16-28 14 10 18 14 16 10 18-44 16 30 16 10h16l12-24 8-14" stroke="#f7ba7b" stroke-width="3" fill="none"/><path d="M40 109h212" stroke="#86a3cb" stroke-width="2.500"/><path stroke="#aaa" stroke-width="4" stroke-dasharray="5 2" d="M12 96V62M24 64h6M24 88h6M24 109h6M40 130v-14M56 134v-18M72 134v-18M90 134v-14M106 134v-18M122 134v-16M138 132v-16M154 132v-16M170 132v-16M186 134v-18M202 130v-14M220 134v-16M236 134v-18M186 47h34M186 169h34"/><path d="M46 180l14-5 20 5M136 180l14-6 14 4M200 178l22-4 16 4" stroke="#f3a04b" stroke-width="3" fill="none"/></svg>
    <div class="flex items-center gap-[5px] leading-5 mt-[5px] pl-px"><svg class="w-[11px] h-[11px]"><use href="#grid4"/></svg>D-5 | corre...</div>
  </div>
  <div class="w-[99px] border-r border-[#c8c8c8] pl-[6px] pt-[6px]">
    <svg class="w-[86px] h-[62px] border border-[#adadad] bg-white" viewBox="0 0 252 180" font-family="Noto Sans" font-weight="700"><g fill="#111" font-size="9"><text x="112" y="40" textLength="140">Top 40 countryies by GDP grow</text><text x="93" y="142" font-size="8" textLength="159">S-12 | Bottom 40 countryies by GDP</text></g><path d="M24 54h228M24 103h228" stroke="#888" stroke-width="2"/><g fill="none" stroke-width="8"><path stroke="#3e9a44" stroke-dasharray="5 35" d="M28 97h220"/><path stroke="#f58220" stroke-dasharray="5 48" d="M41 98h210"/><path stroke="#d13f4b" stroke-dasharray="5 61" d="M68 97h180"/><path stroke="#2470b0" stroke-dasharray="5 35" d="M94 97h150"/><path stroke="#3e9a44" stroke-dasharray="7 40" d="M36 166h205"/><path stroke="#f28e2b" stroke-dasharray="7 24" d="M26 160h200"/><path stroke="#e15759" stroke-dasharray="6 34" d="M104 162h130"/><path stroke="#2fc1d3" d="M204 62h5M118 172h6M78 166h6"/></g><path stroke="#aaa" stroke-width="3" stroke-dasharray="4 2" d="M30 108v16M43 108v14M56 108v16M70 108v12M84 108v16M97 108v14M110 108v16M124 108v16M138 108v12M152 108v16M166 108v14M180 108v16M194 108v16M208 108v12M222 108v14M236 108v16M8 106V70M198 50h30M198 152h30"/></svg>
    <div class="flex items-center gap-[5px] leading-5 mt-[5px] pl-px"><svg class="w-[11px] h-[11px]"><use href="#grid4"/></svg>D-6 | top a...</div>
  </div>
  <div class="w-[99px] border-r border-[#c8c8c8] pl-[6px] pt-[6px] bg-[#fafafa] text-[#333]">
    <svg class="w-[86px] h-[62px] border border-[#dcdcdc] bg-white" viewBox="0 0 252 180" font-family="Noto Sans" font-weight="700"><text x="180" y="21" font-size="11" textLength="76" fill="#59a14f">s-1| For a all</text><path d="M6 36h70v32H6z" fill="#d9d9d9"/><path d="M79 36h70v32H79zM152 36h70v32h-70zM225 36h27v32h-27z" fill="#ececec"/><path d="M10 43h38M10 51h44M10 59h46" stroke="#999" stroke-width="2.500"/><path d="M83 43h34M83 51h48M83 59h36M156 43h36M156 51h32M156 59h46M229 43h23M229 51h23M229 59h23" stroke="#c4c4c4" stroke-width="2.500"/><use href="#world" transform="translate(-98 -38) scale(.480)"/></svg>
    <div class="flex items-center gap-[5px] leading-5 mt-[5px] pl-px font-semibold tracking-[-0.3px]"><svg class="w-3 h-3" viewBox="0 0 12 12" fill="none" stroke="#555"><path d="M6 2.500v9M6 2.500C5 1 3 1 .5 1v8.500c2.500 0 4.500 0 5.500 2 1-2 3-2 5.500-2V1C9 1 7 1 6 2.500z"/></svg>S-1 | 2022...</div>
  </div>
  <svg class="w-[30px] h-24" viewBox="1334 611 30 96" fill="none" stroke="#666" stroke-width="1.200"><path d="M1334 643.500h30M1334 675.500h30" stroke="#c8c8c8"/><path d="M1350 631.500h-6.500v-11h11v6M1346.500 629v-3M1349 629v-5M1351.500 627v-3"/><path d="M1350 662.500h-6.500v-10h11v6M1349 652.500v10M1343.500 657.500h9"/><path d="M1349 686.500v9M1350 695.500c-1-1.500-3-2-6.500-2v-9c3.500 0 5 .5 5.500 2 .5-1.500 2-2 5.500-2v6"/><g stroke="#555" stroke-width="1.800"><path d="M1354 627v8M1350 631h8M1354 658v8M1350 662h8M1354 691v8M1350 695h8"/></g></svg>
</div>

<!-- Status bar -->
<div class="h-5 shrink-0 bg-[#ebebeb] flex justify-end">
  <svg class="w-[372px] h-5" viewBox="992 708 372 20" fill="#555"><path d="M999.500 708v20M1126.500 708v20M1153.500 708v20M1180.500 708v20M1227.500 708v20M1298.500 708v20" stroke="#c8c8c8"/><path d="M1236 714h1.500v7h-1.500zM1242 714v7l-4-3.500zM1257 714v7l-4-3.500zM1269 714v7l4-3.500zM1284 714v7l4-3.500zM1288.500 714h1.500v7h-1.500z"/><path d="M1307 713.500h11M1307 717.500h11M1307 721.500h11" stroke="#b5b5b5" stroke-width="3" stroke-dasharray="3 1"/><path d="M1328 712h11v7h-11z"/><path d="M1328 721.500h11" stroke="#555" stroke-width="2" stroke-dasharray="3 1"/><path fill="#bcbcbc" d="M1349 712h11v11h-11z"/></svg>
</div>

<!-- Taskbar -->
<footer class="h-[23px] shrink-0 bg-[#1c1c1c] flex justify-between text-white">
  <svg class="w-[300px] h-[23px]" viewBox="0 728 300 23">
    <path fill="#fff" d="M16 742.300l6.800-1v8.500H16zM23.800 741.200l8.200-1.200v9.800h-8.200zM16 750.500h6.800v2H16zM23.800 750.500H32v2h-8.200z"/>
    <circle cx="75" cy="745" r="5" fill="none" stroke="#fff" stroke-width="1.400"/><path d="M71 748.500l-3 4" stroke="#fff" stroke-width="1.400"/>
    <path fill="#e8a616" d="M112 739h8l2 2h11v10h-21z"/><path fill="#ffd565" d="M112 742h21v9h-21z"/><path fill="#3898dd" d="M116 749h14v3h-14z"/>
    <linearGradient id="pg"><stop stop-color="#7770f0"/><stop offset="1" stop-color="#3d78dd"/></linearGradient><rect x="160" y="736" width="24" height="22" rx="5" fill="url(#pg)"/><path d="M168 752v-9.500h6a3.200 3.200 0 0 1 0 6.500h-3" fill="none" stroke="#fff" stroke-width="2.500"/>
    <circle cx="221" cy="748" r="12" fill="#e33b2e"/><path fill="#f8c81e" d="M221 742h10.500a12 12 0 0 1 1.500 9h-8z"/><path fill="#2f9e4f" d="M210.500 742l6 9h-7a12 12 0 0 1 1-9z"/><circle cx="221" cy="748" r="6" fill="#fff"/><circle cx="221" cy="748" r="4.700" fill="#2d7ce0"/>
    <path fill="#4a4a4a" d="M246 728h48v23h-48z"/><path fill="#f1f1f1" d="M259 737h22v14h-22z"/><g fill="none"><use href="#blogo" x="270" y="747"/></g>
  </svg>
  <div class="flex">
    <svg class="w-[94px] h-[23px]" viewBox="1150 728 94 23" fill="none" stroke="#fff" stroke-width="1.300"><path d="M1154 750l5-5 5 5M1179 752c0-5 4-9 10-9.500M1182 752c0-4 3-6.500 7-6.500M1185 752c0-2 1-3.500 4-3.500" /><path d="M1203 745.500h10.500v7M1203 747v5M1199 745h5v3c0 1.500-1 2-2.500 2s-2.500-.5-2.500-2zM1200.500 742.500v2.500M1203 742.500v2.500"/><path d="M1206 748h5v4h-5z" fill="#fff"/><path d="M1223 746.500h3l4-4V752M1223 746.500v5M1232 746c1 1.500 1 4 0 5M1235 744c1.500 2 1.500 6 0 8M1237.500 742.500c2 3 2 7 0 9.500"/></svg>
    <span class="w-[78px] pl-5 text-[12px] leading-[21px] tracking-[-0.6px]">22:59</span>
    <svg class="w-[42px] h-[23px]" viewBox="1322 728 42 23"><path fill="#fff" d="M1325 740h16v12h-16z"/><path d="M1328 743.500h10M1328 746.500h8M1328 749.500h5" stroke="#1c1c1c"/><circle cx="1342" cy="752" r="6" fill="#4c4c4c" stroke="#bbb"/><path d="M1361.500 728v23" stroke="#666"/></svg>
  </div>
</footer>
</body>
</html>
